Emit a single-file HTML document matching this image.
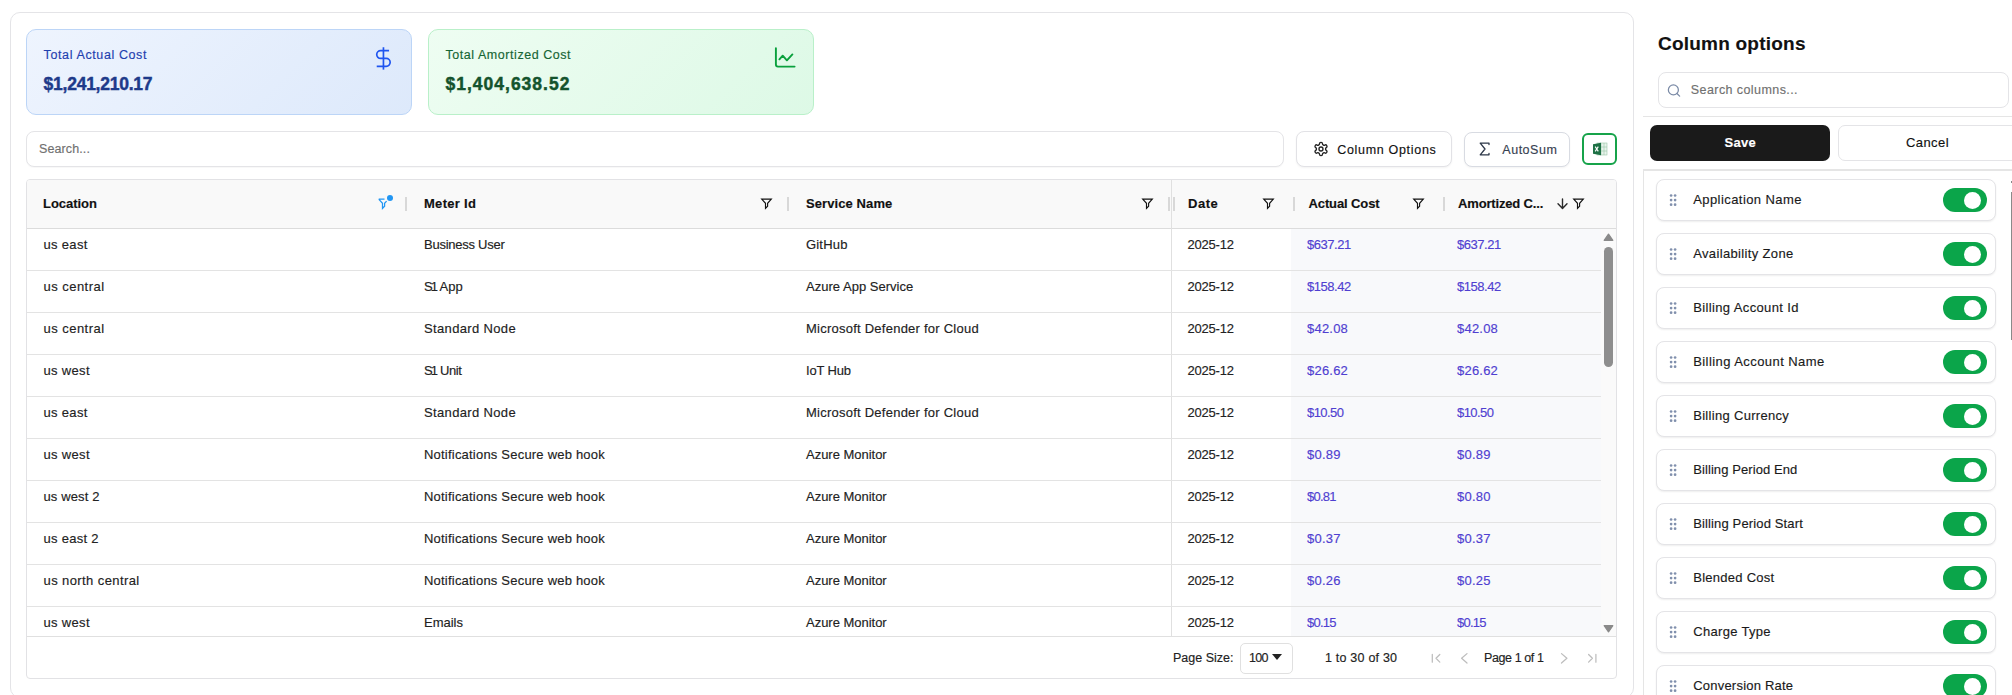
<!DOCTYPE html>
<html><head><meta charset="utf-8"><style>
*{box-sizing:border-box;margin:0;padding:0}
html,body{width:2012px;height:695px;overflow:hidden;background:#fff;font-family:"Liberation Sans",sans-serif;color:#222}
.t{position:absolute;white-space:nowrap;-webkit-text-stroke:0.15px currentColor}
.b{position:absolute}
svg{position:absolute;overflow:visible}
</style></head><body>
<div class="b" style="left:10px;top:12px;width:1624px;height:686px;border:1px solid #e4e4e7;border-radius:10px;background:#fff"></div>
<div class="b" style="left:26px;top:29px;width:386px;height:86px;border:1px solid #bcd5f7;border-radius:10px;background:linear-gradient(135deg,#eef4fe 0%,#dde9fb 100%)"></div>
<div class="b" style="left:428px;top:29px;width:386px;height:86px;border:1px solid #b9f0c9;border-radius:10px;background:linear-gradient(135deg,#eefdf2 0%,#ddf9e6 100%)"></div>
<div class="t" style="left:43.6px;top:49.29px;font-size:12.5px;line-height:13.963px;color:#1e40af;letter-spacing:0.61px;">Total Actual Cost</div>
<div class="t" style="left:43.6px;top:75.06px;font-size:17.5px;line-height:19.547px;font-weight:bold;color:#1e3a8a;letter-spacing:-0.25px;-webkit-text-stroke:0.45px currentColor;">$1,241,210.17</div>
<div class="t" style="left:445.5px;top:49.29px;font-size:12.5px;line-height:13.963px;color:#166534;letter-spacing:0.55px;">Total Amortized Cost</div>
<div class="t" style="left:445.5px;top:75.06px;font-size:17.5px;line-height:19.547px;font-weight:bold;color:#14532d;letter-spacing:1.0px;-webkit-text-stroke:0.45px currentColor;">$1,404,638.52</div>
<svg style="left:369.8px;top:44.6px" width="26.9" height="26.9" viewBox="0 0 24 24" fill="none" stroke="#1f55f0" stroke-width="1.5" stroke-linecap="butt"><line x1="12" y1="2" x2="12" y2="22"/><path d="M17 5H9.5a3.5 3.5 0 0 0 0 7h5a3.5 3.5 0 0 1 0 7H6"/></svg>
<svg style="left:770px;top:44px" width="30" height="30" viewBox="0 0 30 30" fill="none" stroke="#09a03c" stroke-width="1.9" stroke-linecap="round" stroke-linejoin="round"><path d="M5.9 4.3V20.6a2 2 0 0 0 2 2H24.6"/><path d="M9.4 15.3L12.7 11.7L16.9 16.3L22.4 10.4"/></svg>
<div class="b" style="left:26px;top:131px;width:1258px;height:36px;border:1px solid #e4e4e7;border-radius:8px;background:#fff;box-shadow:0 1px 1px rgba(0,0,0,.03)"></div>
<div class="t" style="left:39px;top:142.89px;font-size:12.5px;line-height:13.963px;color:#707070;letter-spacing:0.11px;">Search...</div>
<div class="b" style="left:1296px;top:131px;width:156px;height:36px;border:1px solid #e2e2e6;border-radius:8px;background:#fff;box-shadow:0 1px 2px rgba(0,0,0,.05)"></div>
<svg style="left:1313px;top:141px" width="16" height="16" viewBox="0 0 24 24" fill="none" stroke="#222" stroke-width="2" stroke-linecap="round" stroke-linejoin="round"><path d="M12.22 2h-.44a2 2 0 0 0-2 2v.18a2 2 0 0 1-1 1.73l-.43.25a2 2 0 0 1-2 0l-.15-.08a2 2 0 0 0-2.73.73l-.22.38a2 2 0 0 0 .73 2.73l.15.1a2 2 0 0 1 1 1.72v.51a2 2 0 0 1-1 1.74l-.15.09a2 2 0 0 0-.73 2.73l.22.38a2 2 0 0 0 2.73.73l.15-.08a2 2 0 0 1 2 0l.43.25a2 2 0 0 1 1 1.73V20a2 2 0 0 0 2 2h.44a2 2 0 0 0 2-2v-.18a2 2 0 0 1 1-1.73l.43-.25a2 2 0 0 1 2 0l.15.08a2 2 0 0 0 2.73-.73l.22-.39a2 2 0 0 0-.73-2.73l-.15-.08a2 2 0 0 1-1-1.74v-.5a2 2 0 0 1 1-1.74l.15-.09a2 2 0 0 0 .73-2.73l-.22-.38a2 2 0 0 0-2.73-.73l-.15.08a2 2 0 0 1-2 0l-.43-.25a2 2 0 0 1-1-1.73V4a2 2 0 0 0-2-2z"/><circle cx="12" cy="12" r="3"/></svg>
<div class="t" style="left:1337.2px;top:143.69px;font-size:12.5px;line-height:13.963px;color:#111;letter-spacing:0.69px;">Column Options</div>
<div class="b" style="left:1464px;top:132px;width:106px;height:35px;border:1px solid #d8dbe2;border-radius:8px;background:#fff;box-shadow:0 1px 2px rgba(0,0,0,.05)"></div>
<svg style="left:1478px;top:142px" width="13" height="14" viewBox="0 0 13 14" fill="none" stroke="#2d3748" stroke-width="1.3" stroke-linecap="round" stroke-linejoin="round"><path d="M11 2.6V1.2H2.2L7 7L2.2 12.8H11V11.4"/></svg>
<div class="t" style="left:1502.3px;top:143.69px;font-size:12.5px;line-height:13.963px;color:#374151;letter-spacing:0.52px;">AutoSum</div>
<div class="b" style="left:1582px;top:133px;width:35px;height:32px;border:2px solid #16a34a;border-radius:6px;background:#fff"></div>
<svg style="left:1592px;top:141px" width="16" height="16" viewBox="0 0 16 16"><rect x="5" y="2" width="10" height="12" fill="#e8f3ec" stroke="#9cc7a8" stroke-width=".6"/><path d="M9 2v12M5 6h10M5 10h10M12 2v12" stroke="#9cc7a8" stroke-width=".6"/><path d="M1 3.2L9 1.8v12.4L1 12.8z" fill="#1d7044"/><path d="M3.2 5.6L6.3 10.4M6.3 5.6L3.2 10.4" stroke="#fff" stroke-width="1.1"/></svg>
<div class="b" style="left:26px;top:179px;width:1591px;height:500px;border:1px solid #e2e2e5;border-radius:4px;background:#fff"></div>
<div class="b" style="left:27px;top:180px;width:1589px;height:49px;background:#f9f9f9;border-bottom:1px solid #dcdcdc;border-radius:3px 3px 0 0"></div>
<div class="b" style="left:1291px;top:229px;width:310px;height:407px;background:#f8f9fb"></div>
<div class="b" style="left:1171px;top:180px;width:1px;height:456px;background:#e0e0e0"></div>
<div class="b" style="left:405.3px;top:197px;width:1.6px;height:14px;background:#d8d8d8"></div>
<div class="b" style="left:787.3px;top:197px;width:1.6px;height:14px;background:#d8d8d8"></div>
<div class="b" style="left:1168.4px;top:197px;width:1.6px;height:14px;background:#d8d8d8"></div>
<div class="b" style="left:1173.4px;top:197px;width:1.6px;height:14px;background:#d8d8d8"></div>
<div class="b" style="left:1293px;top:197px;width:1.6px;height:14px;background:#d8d8d8"></div>
<div class="b" style="left:1443.3px;top:197px;width:1.6px;height:14px;background:#d8d8d8"></div>
<div class="t" style="left:43px;top:196.63px;font-size:13px;line-height:14.521px;font-weight:bold;color:#111;letter-spacing:-0.04px;">Location</div>
<div class="t" style="left:424px;top:196.63px;font-size:13px;line-height:14.521px;font-weight:bold;color:#111;letter-spacing:0.29px;">Meter Id</div>
<div class="t" style="left:806px;top:196.63px;font-size:13px;line-height:14.521px;font-weight:bold;color:#111;letter-spacing:0.09px;">Service Name</div>
<div class="t" style="left:1188px;top:196.63px;font-size:13px;line-height:14.521px;font-weight:bold;color:#111;letter-spacing:0.53px;">Date</div>
<div class="t" style="left:1308.5px;top:196.63px;font-size:13px;line-height:14.521px;font-weight:bold;color:#111;letter-spacing:-0.11px;">Actual Cost</div>
<div class="t" style="left:1458px;top:196.63px;font-size:13px;line-height:14.521px;font-weight:bold;color:#111;letter-spacing:-0.16px;">Amortized C...</div>
<svg style="left:761px;top:198.4px" width="11" height="11" viewBox="0 0 11 11" fill="none" stroke="#111" stroke-width="1.15" stroke-linejoin="miter"><path d="M0.7 1.1H10.3L6.6 5.3V8.2L4.5 10.4V5.3Z"/></svg>
<svg style="left:1141.8px;top:198.4px" width="11" height="11" viewBox="0 0 11 11" fill="none" stroke="#111" stroke-width="1.15" stroke-linejoin="miter"><path d="M0.7 1.1H10.3L6.6 5.3V8.2L4.5 10.4V5.3Z"/></svg>
<svg style="left:1262.5px;top:198.4px" width="11" height="11" viewBox="0 0 11 11" fill="none" stroke="#111" stroke-width="1.15" stroke-linejoin="miter"><path d="M0.7 1.1H10.3L6.6 5.3V8.2L4.5 10.4V5.3Z"/></svg>
<svg style="left:1413px;top:198.4px" width="11" height="11" viewBox="0 0 11 11" fill="none" stroke="#111" stroke-width="1.15" stroke-linejoin="miter"><path d="M0.7 1.1H10.3L6.6 5.3V8.2L4.5 10.4V5.3Z"/></svg>
<svg style="left:1572.8px;top:198.4px" width="11" height="11" viewBox="0 0 11 11" fill="none" stroke="#111" stroke-width="1.15" stroke-linejoin="miter"><path d="M0.7 1.1H10.3L6.6 5.3V8.2L4.5 10.4V5.3Z"/></svg>
<svg style="left:378px;top:198.3px" width="11" height="11" viewBox="0 0 11 11" fill="none" stroke="#2196f3" stroke-width="1.25" stroke-linejoin="miter"><path d="M0.7 1.1H6.5M8.6 3.1L6.6 5.3V8.2L4.5 10.4V5.3L0.7 1.1"/></svg>
<div class="b" style="left:387px;top:195px;width:6px;height:6px;background:#2196f3;border-radius:50%"></div>
<svg style="left:1556.5px;top:197px" width="11" height="13" viewBox="0 0 11 13" fill="none" stroke="#2a2a2a" stroke-width="1.4" stroke-linecap="round" stroke-linejoin="round"><path d="M5.5 2V11.4M1 6.7L5.5 11.4L10 6.7"/></svg>
<div class="b" style="left:27px;top:270px;width:1574px;height:1px;background:#e3e3e3"></div>
<div class="t" style="left:43.5px;top:238.13px;font-size:13px;line-height:14.521px;color:#222;letter-spacing:0.32px;">us east</div>
<div class="t" style="left:424px;top:238.13px;font-size:13px;line-height:14.521px;color:#222;letter-spacing:-0.25px;">Business User</div>
<div class="t" style="left:806px;top:238.13px;font-size:13px;line-height:14.521px;color:#222;letter-spacing:0.18px;">GitHub</div>
<div class="t" style="left:1187.5px;top:238.13px;font-size:13px;line-height:14.521px;color:#222;letter-spacing:-0.22px;">2025-12</div>
<div class="t" style="left:1307px;top:238.13px;font-size:13px;line-height:14.521px;color:#4f3fd1;letter-spacing:-0.465px;">$637.21</div>
<div class="t" style="left:1457px;top:238.13px;font-size:13px;line-height:14.521px;color:#4f3fd1;letter-spacing:-0.465px;">$637.21</div>
<div class="b" style="left:27px;top:312px;width:1574px;height:1px;background:#e3e3e3"></div>
<div class="t" style="left:43.5px;top:280.13px;font-size:13px;line-height:14.521px;color:#222;letter-spacing:0.47px;">us central</div>
<div class="t" style="left:424px;top:280.13px;font-size:13px;line-height:14.521px;color:#222;"><span style="letter-spacing:-1.9px">S</span><span style="letter-spacing:-1.4px">1</span> App</div>
<div class="t" style="left:806px;top:280.13px;font-size:13px;line-height:14.521px;color:#222;letter-spacing:0.02px;">Azure App Service</div>
<div class="t" style="left:1187.5px;top:280.13px;font-size:13px;line-height:14.521px;color:#222;letter-spacing:-0.22px;">2025-12</div>
<div class="t" style="left:1307px;top:280.13px;font-size:13px;line-height:14.521px;color:#4f3fd1;letter-spacing:-0.465px;">$158.42</div>
<div class="t" style="left:1457px;top:280.13px;font-size:13px;line-height:14.521px;color:#4f3fd1;letter-spacing:-0.465px;">$158.42</div>
<div class="b" style="left:27px;top:354px;width:1574px;height:1px;background:#e3e3e3"></div>
<div class="t" style="left:43.5px;top:322.13px;font-size:13px;line-height:14.521px;color:#222;letter-spacing:0.47px;">us central</div>
<div class="t" style="left:424px;top:322.13px;font-size:13px;line-height:14.521px;color:#222;letter-spacing:0.35px;">Standard Node</div>
<div class="t" style="left:806px;top:322.13px;font-size:13px;line-height:14.521px;color:#222;letter-spacing:0.24px;">Microsoft Defender for Cloud</div>
<div class="t" style="left:1187.5px;top:322.13px;font-size:13px;line-height:14.521px;color:#222;letter-spacing:-0.22px;">2025-12</div>
<div class="t" style="left:1307px;top:322.13px;font-size:13px;line-height:14.521px;color:#4f3fd1;letter-spacing:0.208px;">$42.08</div>
<div class="t" style="left:1457px;top:322.13px;font-size:13px;line-height:14.521px;color:#4f3fd1;letter-spacing:0.208px;">$42.08</div>
<div class="b" style="left:27px;top:396px;width:1574px;height:1px;background:#e3e3e3"></div>
<div class="t" style="left:43.5px;top:364.13px;font-size:13px;line-height:14.521px;color:#222;letter-spacing:0.33px;">us west</div>
<div class="t" style="left:424px;top:364.13px;font-size:13px;line-height:14.521px;color:#222;letter-spacing:-0.35px;"><span style="letter-spacing:-1.9px">S</span><span style="letter-spacing:-1.4px">1</span> Unit</div>
<div class="t" style="left:806px;top:364.13px;font-size:13px;line-height:14.521px;color:#222;letter-spacing:-0.17px;">IoT Hub</div>
<div class="t" style="left:1187.5px;top:364.13px;font-size:13px;line-height:14.521px;color:#222;letter-spacing:-0.22px;">2025-12</div>
<div class="t" style="left:1307px;top:364.13px;font-size:13px;line-height:14.521px;color:#4f3fd1;letter-spacing:0.208px;">$26.62</div>
<div class="t" style="left:1457px;top:364.13px;font-size:13px;line-height:14.521px;color:#4f3fd1;letter-spacing:0.208px;">$26.62</div>
<div class="b" style="left:27px;top:438px;width:1574px;height:1px;background:#e3e3e3"></div>
<div class="t" style="left:43.5px;top:406.13px;font-size:13px;line-height:14.521px;color:#222;letter-spacing:0.32px;">us east</div>
<div class="t" style="left:424px;top:406.13px;font-size:13px;line-height:14.521px;color:#222;letter-spacing:0.35px;">Standard Node</div>
<div class="t" style="left:806px;top:406.13px;font-size:13px;line-height:14.521px;color:#222;letter-spacing:0.24px;">Microsoft Defender for Cloud</div>
<div class="t" style="left:1187.5px;top:406.13px;font-size:13px;line-height:14.521px;color:#222;letter-spacing:-0.22px;">2025-12</div>
<div class="t" style="left:1307px;top:406.13px;font-size:13px;line-height:14.521px;color:#4f3fd1;letter-spacing:-0.572px;">$10.50</div>
<div class="t" style="left:1457px;top:406.13px;font-size:13px;line-height:14.521px;color:#4f3fd1;letter-spacing:-0.572px;">$10.50</div>
<div class="b" style="left:27px;top:480px;width:1574px;height:1px;background:#e3e3e3"></div>
<div class="t" style="left:43.5px;top:448.13px;font-size:13px;line-height:14.521px;color:#222;letter-spacing:0.33px;">us west</div>
<div class="t" style="left:424px;top:448.13px;font-size:13px;line-height:14.521px;color:#222;letter-spacing:0.21px;">Notifications Secure web hook</div>
<div class="t" style="left:806px;top:448.13px;font-size:13px;line-height:14.521px;color:#222;letter-spacing:-0.02px;">Azure Monitor</div>
<div class="t" style="left:1187.5px;top:448.13px;font-size:13px;line-height:14.521px;color:#222;letter-spacing:-0.22px;">2025-12</div>
<div class="t" style="left:1307px;top:448.13px;font-size:13px;line-height:14.521px;color:#4f3fd1;letter-spacing:0.242px;">$0.89</div>
<div class="t" style="left:1457px;top:448.13px;font-size:13px;line-height:14.521px;color:#4f3fd1;letter-spacing:0.242px;">$0.89</div>
<div class="b" style="left:27px;top:522px;width:1574px;height:1px;background:#e3e3e3"></div>
<div class="t" style="left:43.5px;top:490.13px;font-size:13px;line-height:14.521px;color:#222;letter-spacing:0.12px;">us west 2</div>
<div class="t" style="left:424px;top:490.13px;font-size:13px;line-height:14.521px;color:#222;letter-spacing:0.21px;">Notifications Secure web hook</div>
<div class="t" style="left:806px;top:490.13px;font-size:13px;line-height:14.521px;color:#222;letter-spacing:-0.02px;">Azure Monitor</div>
<div class="t" style="left:1187.5px;top:490.13px;font-size:13px;line-height:14.521px;color:#222;letter-spacing:-0.22px;">2025-12</div>
<div class="t" style="left:1307px;top:490.13px;font-size:13px;line-height:14.521px;color:#4f3fd1;letter-spacing:-0.733px;">$0.81</div>
<div class="t" style="left:1457px;top:490.13px;font-size:13px;line-height:14.521px;color:#4f3fd1;letter-spacing:0.242px;">$0.80</div>
<div class="b" style="left:27px;top:564px;width:1574px;height:1px;background:#e3e3e3"></div>
<div class="t" style="left:43.5px;top:532.13px;font-size:13px;line-height:14.521px;color:#222;letter-spacing:0.29px;">us east 2</div>
<div class="t" style="left:424px;top:532.13px;font-size:13px;line-height:14.521px;color:#222;letter-spacing:0.21px;">Notifications Secure web hook</div>
<div class="t" style="left:806px;top:532.13px;font-size:13px;line-height:14.521px;color:#222;letter-spacing:-0.02px;">Azure Monitor</div>
<div class="t" style="left:1187.5px;top:532.13px;font-size:13px;line-height:14.521px;color:#222;letter-spacing:-0.22px;">2025-12</div>
<div class="t" style="left:1307px;top:532.13px;font-size:13px;line-height:14.521px;color:#4f3fd1;letter-spacing:0.242px;">$0.37</div>
<div class="t" style="left:1457px;top:532.13px;font-size:13px;line-height:14.521px;color:#4f3fd1;letter-spacing:0.242px;">$0.37</div>
<div class="b" style="left:27px;top:606px;width:1574px;height:1px;background:#e3e3e3"></div>
<div class="t" style="left:43.5px;top:574.13px;font-size:13px;line-height:14.521px;color:#222;letter-spacing:0.41px;">us north central</div>
<div class="t" style="left:424px;top:574.13px;font-size:13px;line-height:14.521px;color:#222;letter-spacing:0.21px;">Notifications Secure web hook</div>
<div class="t" style="left:806px;top:574.13px;font-size:13px;line-height:14.521px;color:#222;letter-spacing:-0.02px;">Azure Monitor</div>
<div class="t" style="left:1187.5px;top:574.13px;font-size:13px;line-height:14.521px;color:#222;letter-spacing:-0.22px;">2025-12</div>
<div class="t" style="left:1307px;top:574.13px;font-size:13px;line-height:14.521px;color:#4f3fd1;letter-spacing:0.242px;">$0.26</div>
<div class="t" style="left:1457px;top:574.13px;font-size:13px;line-height:14.521px;color:#4f3fd1;letter-spacing:0.242px;">$0.25</div>
<div class="t" style="left:43.5px;top:616.13px;font-size:13px;line-height:14.521px;color:#222;letter-spacing:0.33px;">us west</div>
<div class="t" style="left:424px;top:616.13px;font-size:13px;line-height:14.521px;color:#222;">Emails</div>
<div class="t" style="left:806px;top:616.13px;font-size:13px;line-height:14.521px;color:#222;letter-spacing:-0.02px;">Azure Monitor</div>
<div class="t" style="left:1187.5px;top:616.13px;font-size:13px;line-height:14.521px;color:#222;letter-spacing:-0.22px;">2025-12</div>
<div class="t" style="left:1307px;top:616.13px;font-size:13px;line-height:14.521px;color:#4f3fd1;letter-spacing:-0.733px;">$0.15</div>
<div class="t" style="left:1457px;top:616.13px;font-size:13px;line-height:14.521px;color:#4f3fd1;letter-spacing:-0.733px;">$0.15</div>
<div class="b" style="left:1601px;top:229px;width:15px;height:407px;background:#fafafa"></div>
<svg style="left:1603px;top:233px" width="11" height="9" viewBox="0 0 11 9"><path d="M5.5 1.2L9.8 7.3H1.2z" fill="#8a8a8a" stroke="#8a8a8a" stroke-width="1.3" stroke-linejoin="round"/></svg>
<div class="b" style="left:1604px;top:247px;width:9px;height:120px;background:#8e8e8e;border-radius:4.5px"></div>
<svg style="left:1603px;top:624px" width="11" height="9" viewBox="0 0 11 9"><path d="M5.5 7.8L9.8 1.7H1.2z" fill="#8a8a8a" stroke="#8a8a8a" stroke-width="1.3" stroke-linejoin="round"/></svg>
<div class="b" style="left:27px;top:636px;width:1589px;height:1px;background:#e0e0e0"></div>
<div class="t" style="left:1173px;top:651.69px;font-size:12.5px;line-height:13.963px;color:#222;">Page Size:</div>
<div class="b" style="left:1240px;top:642.5px;width:53px;height:31.5px;border:1px solid #e0e0e0;border-radius:5px;background:#fff"></div>
<div class="t" style="left:1249px;top:651.69px;font-size:12.5px;line-height:13.963px;color:#222;letter-spacing:-0.7px;">100</div>
<svg style="left:1272px;top:654px" width="10" height="6" viewBox="0 0 10 6"><path d="M0 0h10L5 6z" fill="#222"/></svg>
<div class="t" style="left:1325px;top:651.69px;font-size:12.5px;line-height:13.963px;color:#222;letter-spacing:0.21px;">1 to 30 of 30</div>
<div class="t" style="left:1484px;top:651.69px;font-size:12.5px;line-height:13.963px;color:#222;letter-spacing:-0.4px;">Page 1 of 1</div>
<svg style="left:1420px;top:640px" width="190" height="35" viewBox="0 0 190 35" fill="none" stroke="#bdbdbd" stroke-width="1.25" stroke-linecap="round" stroke-linejoin="round"><path d="M12.3 14.3V22.2M19.8 14.5L16 18.3L19.8 22.1"/><path d="M47 13.6L41.6 18.3L47 23"/><path d="M141.5 13.6L146.9 18.3L141.5 23"/><path d="M168.6 14.5L172.4 18.3L168.6 22.1M175.9 14.3V22.2"/></svg>
<div class="t" style="left:1658px;top:32.91px;font-size:19px;line-height:21.223px;font-weight:bold;color:#111;letter-spacing:0.22px;">Column options</div>
<div class="b" style="left:1658px;top:72.3px;width:351px;height:36px;border:1px solid #e4e4e7;border-radius:8px;background:#fff"></div>
<svg style="left:1666px;top:83px" width="16" height="15" viewBox="0 0 24 24" fill="none" stroke="#7a8aa6" stroke-width="2" stroke-linecap="round"><circle cx="11" cy="11" r="8"/><path d="M21 21l-4.3-4.3"/></svg>
<div class="t" style="left:1690.8px;top:83.69px;font-size:12.5px;line-height:13.963px;color:#707070;letter-spacing:0.42px;">Search columns...</div>
<div class="b" style="left:1643px;top:116px;width:369px;height:1px;background:#e5e5e5"></div>
<div class="b" style="left:1650px;top:125px;width:180px;height:36px;background:#1a1a1a;border-radius:7px"></div>
<div class="t" style="left:1724.5px;top:136.24px;font-size:13px;line-height:14.521px;font-weight:bold;color:#fff;letter-spacing:0.33px;">Save</div>
<div class="b" style="left:1838px;top:125.3px;width:200px;height:35.5px;border:1px solid #e4e4e7;border-radius:7px;background:#fff"></div>
<div class="t" style="left:1906px;top:136.24px;font-size:13px;line-height:14.521px;color:#111;letter-spacing:0.42px;">Cancel</div>
<div class="b" style="left:1643px;top:169px;width:369px;height:1.5px;background:#e5e5e5"></div>
<div class="b" style="left:1643px;top:170px;width:1px;height:525px;background:#e5e5e5"></div>
<div class="b" style="left:2010.5px;top:191.5px;width:2px;height:148px;background:#8a8a8a"></div>
<div class="b" style="left:2010.5px;top:180.5px;width:2px;height:2px;background:#888"></div>
<div class="b" style="left:1656px;top:178.8px;width:339.5px;height:42px;border:1px solid #e4e4e7;border-radius:8px;background:#fff;box-shadow:0 1px 2px rgba(0,0,0,.07)"></div>
<svg style="left:1665px;top:178.80px" width="16" height="40" viewBox="0 0 16 40" fill="#8190ad"><circle cx="6.1" cy="16.5" r="1.35"/><circle cx="10.1" cy="16.5" r="1.35"/><circle cx="6.1" cy="21.1" r="1.35"/><circle cx="10.1" cy="21.1" r="1.35"/><circle cx="6.1" cy="25.7" r="1.35"/><circle cx="10.1" cy="25.7" r="1.35"/></svg>
<div class="t" style="left:1693.2px;top:193.24px;font-size:13px;line-height:14.521px;color:#1a1a1a;letter-spacing:0.43px;">Application Name</div>
<div class="b" style="left:1943px;top:188.0px;width:44px;height:24px;background:#0ba54a;border-radius:12px"></div>
<div class="b" style="left:1963.6px;top:191.5px;width:17px;height:17px;background:#fff;border-radius:50%"></div>
<div class="b" style="left:1656px;top:232.8px;width:339.5px;height:42px;border:1px solid #e4e4e7;border-radius:8px;background:#fff;box-shadow:0 1px 2px rgba(0,0,0,.07)"></div>
<svg style="left:1665px;top:232.80px" width="16" height="40" viewBox="0 0 16 40" fill="#8190ad"><circle cx="6.1" cy="16.5" r="1.35"/><circle cx="10.1" cy="16.5" r="1.35"/><circle cx="6.1" cy="21.1" r="1.35"/><circle cx="10.1" cy="21.1" r="1.35"/><circle cx="6.1" cy="25.7" r="1.35"/><circle cx="10.1" cy="25.7" r="1.35"/></svg>
<div class="t" style="left:1693.2px;top:247.24px;font-size:13px;line-height:14.521px;color:#1a1a1a;letter-spacing:0.35px;">Availability Zone</div>
<div class="b" style="left:1943px;top:242.0px;width:44px;height:24px;background:#0ba54a;border-radius:12px"></div>
<div class="b" style="left:1963.6px;top:245.5px;width:17px;height:17px;background:#fff;border-radius:50%"></div>
<div class="b" style="left:1656px;top:286.8px;width:339.5px;height:42px;border:1px solid #e4e4e7;border-radius:8px;background:#fff;box-shadow:0 1px 2px rgba(0,0,0,.07)"></div>
<svg style="left:1665px;top:286.80px" width="16" height="40" viewBox="0 0 16 40" fill="#8190ad"><circle cx="6.1" cy="16.5" r="1.35"/><circle cx="10.1" cy="16.5" r="1.35"/><circle cx="6.1" cy="21.1" r="1.35"/><circle cx="10.1" cy="21.1" r="1.35"/><circle cx="6.1" cy="25.7" r="1.35"/><circle cx="10.1" cy="25.7" r="1.35"/></svg>
<div class="t" style="left:1693.2px;top:301.24px;font-size:13px;line-height:14.521px;color:#1a1a1a;letter-spacing:0.37px;">Billing Account Id</div>
<div class="b" style="left:1943px;top:296.0px;width:44px;height:24px;background:#0ba54a;border-radius:12px"></div>
<div class="b" style="left:1963.6px;top:299.5px;width:17px;height:17px;background:#fff;border-radius:50%"></div>
<div class="b" style="left:1656px;top:340.8px;width:339.5px;height:42px;border:1px solid #e4e4e7;border-radius:8px;background:#fff;box-shadow:0 1px 2px rgba(0,0,0,.07)"></div>
<svg style="left:1665px;top:340.80px" width="16" height="40" viewBox="0 0 16 40" fill="#8190ad"><circle cx="6.1" cy="16.5" r="1.35"/><circle cx="10.1" cy="16.5" r="1.35"/><circle cx="6.1" cy="21.1" r="1.35"/><circle cx="10.1" cy="21.1" r="1.35"/><circle cx="6.1" cy="25.7" r="1.35"/><circle cx="10.1" cy="25.7" r="1.35"/></svg>
<div class="t" style="left:1693.2px;top:355.24px;font-size:13px;line-height:14.521px;color:#1a1a1a;letter-spacing:0.43px;">Billing Account Name</div>
<div class="b" style="left:1943px;top:350.0px;width:44px;height:24px;background:#0ba54a;border-radius:12px"></div>
<div class="b" style="left:1963.6px;top:353.5px;width:17px;height:17px;background:#fff;border-radius:50%"></div>
<div class="b" style="left:1656px;top:394.8px;width:339.5px;height:42px;border:1px solid #e4e4e7;border-radius:8px;background:#fff;box-shadow:0 1px 2px rgba(0,0,0,.07)"></div>
<svg style="left:1665px;top:394.80px" width="16" height="40" viewBox="0 0 16 40" fill="#8190ad"><circle cx="6.1" cy="16.5" r="1.35"/><circle cx="10.1" cy="16.5" r="1.35"/><circle cx="6.1" cy="21.1" r="1.35"/><circle cx="10.1" cy="21.1" r="1.35"/><circle cx="6.1" cy="25.7" r="1.35"/><circle cx="10.1" cy="25.7" r="1.35"/></svg>
<div class="t" style="left:1693.2px;top:409.24px;font-size:13px;line-height:14.521px;color:#1a1a1a;letter-spacing:0.31px;">Billing Currency</div>
<div class="b" style="left:1943px;top:404.0px;width:44px;height:24px;background:#0ba54a;border-radius:12px"></div>
<div class="b" style="left:1963.6px;top:407.5px;width:17px;height:17px;background:#fff;border-radius:50%"></div>
<div class="b" style="left:1656px;top:448.8px;width:339.5px;height:42px;border:1px solid #e4e4e7;border-radius:8px;background:#fff;box-shadow:0 1px 2px rgba(0,0,0,.07)"></div>
<svg style="left:1665px;top:448.80px" width="16" height="40" viewBox="0 0 16 40" fill="#8190ad"><circle cx="6.1" cy="16.5" r="1.35"/><circle cx="10.1" cy="16.5" r="1.35"/><circle cx="6.1" cy="21.1" r="1.35"/><circle cx="10.1" cy="21.1" r="1.35"/><circle cx="6.1" cy="25.7" r="1.35"/><circle cx="10.1" cy="25.7" r="1.35"/></svg>
<div class="t" style="left:1693.2px;top:463.24px;font-size:13px;line-height:14.521px;color:#1a1a1a;letter-spacing:0.09px;">Billing Period End</div>
<div class="b" style="left:1943px;top:458.0px;width:44px;height:24px;background:#0ba54a;border-radius:12px"></div>
<div class="b" style="left:1963.6px;top:461.5px;width:17px;height:17px;background:#fff;border-radius:50%"></div>
<div class="b" style="left:1656px;top:502.8px;width:339.5px;height:42px;border:1px solid #e4e4e7;border-radius:8px;background:#fff;box-shadow:0 1px 2px rgba(0,0,0,.07)"></div>
<svg style="left:1665px;top:502.80px" width="16" height="40" viewBox="0 0 16 40" fill="#8190ad"><circle cx="6.1" cy="16.5" r="1.35"/><circle cx="10.1" cy="16.5" r="1.35"/><circle cx="6.1" cy="21.1" r="1.35"/><circle cx="10.1" cy="21.1" r="1.35"/><circle cx="6.1" cy="25.7" r="1.35"/><circle cx="10.1" cy="25.7" r="1.35"/></svg>
<div class="t" style="left:1693.2px;top:517.24px;font-size:13px;line-height:14.521px;color:#1a1a1a;letter-spacing:0.14px;">Billing Period Start</div>
<div class="b" style="left:1943px;top:512.0px;width:44px;height:24px;background:#0ba54a;border-radius:12px"></div>
<div class="b" style="left:1963.6px;top:515.5px;width:17px;height:17px;background:#fff;border-radius:50%"></div>
<div class="b" style="left:1656px;top:556.8px;width:339.5px;height:42px;border:1px solid #e4e4e7;border-radius:8px;background:#fff;box-shadow:0 1px 2px rgba(0,0,0,.07)"></div>
<svg style="left:1665px;top:556.80px" width="16" height="40" viewBox="0 0 16 40" fill="#8190ad"><circle cx="6.1" cy="16.5" r="1.35"/><circle cx="10.1" cy="16.5" r="1.35"/><circle cx="6.1" cy="21.1" r="1.35"/><circle cx="10.1" cy="21.1" r="1.35"/><circle cx="6.1" cy="25.7" r="1.35"/><circle cx="10.1" cy="25.7" r="1.35"/></svg>
<div class="t" style="left:1693.2px;top:571.24px;font-size:13px;line-height:14.521px;color:#1a1a1a;letter-spacing:0.27px;">Blended Cost</div>
<div class="b" style="left:1943px;top:566.0px;width:44px;height:24px;background:#0ba54a;border-radius:12px"></div>
<div class="b" style="left:1963.6px;top:569.5px;width:17px;height:17px;background:#fff;border-radius:50%"></div>
<div class="b" style="left:1656px;top:610.8px;width:339.5px;height:42px;border:1px solid #e4e4e7;border-radius:8px;background:#fff;box-shadow:0 1px 2px rgba(0,0,0,.07)"></div>
<svg style="left:1665px;top:610.80px" width="16" height="40" viewBox="0 0 16 40" fill="#8190ad"><circle cx="6.1" cy="16.5" r="1.35"/><circle cx="10.1" cy="16.5" r="1.35"/><circle cx="6.1" cy="21.1" r="1.35"/><circle cx="10.1" cy="21.1" r="1.35"/><circle cx="6.1" cy="25.7" r="1.35"/><circle cx="10.1" cy="25.7" r="1.35"/></svg>
<div class="t" style="left:1693.2px;top:625.24px;font-size:13px;line-height:14.521px;color:#1a1a1a;letter-spacing:0.32px;">Charge Type</div>
<div class="b" style="left:1943px;top:620.0px;width:44px;height:24px;background:#0ba54a;border-radius:12px"></div>
<div class="b" style="left:1963.6px;top:623.5px;width:17px;height:17px;background:#fff;border-radius:50%"></div>
<div class="b" style="left:1656px;top:664.8px;width:339.5px;height:42px;border:1px solid #e4e4e7;border-radius:8px;background:#fff;box-shadow:0 1px 2px rgba(0,0,0,.07)"></div>
<svg style="left:1665px;top:664.80px" width="16" height="40" viewBox="0 0 16 40" fill="#8190ad"><circle cx="6.1" cy="16.5" r="1.35"/><circle cx="10.1" cy="16.5" r="1.35"/><circle cx="6.1" cy="21.1" r="1.35"/><circle cx="10.1" cy="21.1" r="1.35"/><circle cx="6.1" cy="25.7" r="1.35"/><circle cx="10.1" cy="25.7" r="1.35"/></svg>
<div class="t" style="left:1693.2px;top:679.24px;font-size:13px;line-height:14.521px;color:#1a1a1a;letter-spacing:0.22px;">Conversion Rate</div>
<div class="b" style="left:1943px;top:674.0px;width:44px;height:24px;background:#0ba54a;border-radius:12px"></div>
<div class="b" style="left:1963.6px;top:677.5px;width:17px;height:17px;background:#fff;border-radius:50%"></div>
</body></html>
